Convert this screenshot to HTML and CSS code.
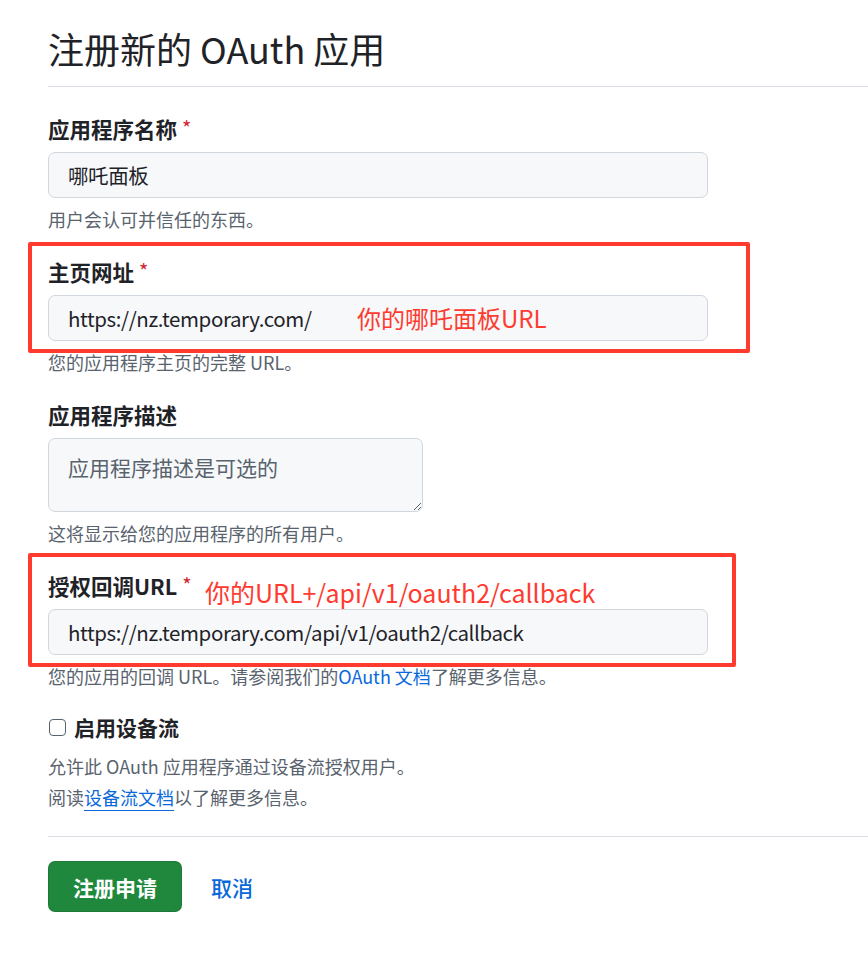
FILE: index.html
```html
<!DOCTYPE html>
<html lang="zh-CN">
<head>
  <meta charset="UTF-8" />
  <meta name="viewport" content="width=device-width, initial-scale=1.0"/>
  <title>注册新的 OAuth 应用</title>
  <link rel="stylesheet" href="styles.css">
</head>
<body>

  <div class="page">
    <h1 class="title">注册新的 OAuth 应用</h1>

    <form onsubmit="return false">
      <div class="form-group">
        <label class="label" for="appName">应用程序名称 <span class="req">*</span></label>
        <input type="text" id="appName" class="input" value="哪吒面板">
        <p class="hint">用户会认可并信任的东西。</p>
      </div>

      <div class="form-group marked">
        <div class="mark mark-home"></div>
        <label class="label" for="homeUrl">主页网址 <span class="req">*</span></label>
        <div class="input-wrap">
          <input type="text" id="homeUrl" class="input" value="https://nz.temporary.com/">
          <span class="note note-home">你的哪吒面板URL</span>
        </div>
        <p class="hint">您的应用程序主页的完整 URL。</p>
      </div>

      <div class="form-group">
        <label class="label" for="desc">应用程序描述</label>
        <textarea id="desc" class="textarea" placeholder="应用程序描述是可选的"></textarea>
        <p class="hint">这将显示给您的应用程序的所有用户。</p>
      </div>

      <div class="form-group marked">
        <div class="mark mark-callback"></div>
        <label class="label" for="callback">授权回调URL <span class="req">*</span></label>
        <span class="note note-callback">你的URL+/api/v1/oauth2/callback</span>
        <input type="text" id="callback" class="input" value="https://nz.temporary.com/api/v1/oauth2/callback">
        <p class="hint">您的应用的回调 URL。请参阅我们的<a href="#">OAuth 文档</a>了解更多信息。</p>
      </div>

      <div class="form-group device">
        <label class="check-row">
          <input type="checkbox" class="check">
          <span class="check-label">启用设备流</span>
        </label>
        <p class="desc">允许此 OAuth 应用程序通过设备流授权用户。</p>
        <p class="desc">阅读<a href="#" class="underline">设备流文档</a>以了解更多信息。</p>
      </div>

      <div class="actions">
        <button type="submit" class="btn">注册申请</button>
        <a href="#" class="cancel">取消</a>
      </div>
    </form>
  </div>

</body>
</html>
```

FILE: styles.css
```css
* { margin: 0; padding: 0; box-sizing: border-box; }
body {
  font-family: "Noto Sans CJK SC", "Noto Sans", sans-serif;
  color: #1f2328;
  background: #fff;
}
.page {
  padding-left: 48px;
}
.title {
  font-size: 36px;
  font-weight: 400;
  line-height: 48px;
  padding-top: 24px;
  padding-bottom: 14px;
  border-bottom: 1px solid #d8dee4;
}
.form-group {
  position: relative;
  margin-top: 26px;
  width: 660px;
}
.form-group:first-child { margin-top: 27px; }
.label {
  display: flex;
  align-items: center;
  gap: 5px;
  height: 28px;
  font-size: 21.5px;
  font-weight: 700;
  margin-bottom: 10px;
}
.req {
  color: #d1242f;
  font-weight: 400;
  font-size: 20px;
  line-height: 1;
}
.input {
  display: block;
  width: 660px;
  height: 46px;
  padding: 0 19px;
  font-family: inherit;
  font-size: 20.5px;
  letter-spacing: -0.4px;
  color: #1f2328;
  background: #f6f8fa;
  border: 1px solid #d0d7de;
  border-radius: 7px;
}
.input:focus, .textarea:focus { outline: none; }
.input-wrap { position: relative; }
.textarea {
  display: block;
  width: 375px;
  height: 74px;
  padding: 14px 19px;
  font-family: inherit;
  font-size: 21px;
  line-height: 28px;
  color: #1f2328;
  background: #f6f8fa;
  border: 1px solid #d0d7de;
  border-radius: 7px;
}
.textarea::placeholder { color: #59636e; }
.hint {
  font-size: 18px;
  line-height: 24px;
  color: #59636e;
  margin-top: 9px;
}
.hint a {
  color: #0969da;
  text-decoration: none;
}

/* red annotations drawn over the screenshot */
.mark {
  position: absolute;
  left: -20px;
  border: 4px solid #ff3b30;
  border-radius: 2px;
  pointer-events: none;
}
.mark-home { top: -15px; width: 722px; height: 111px; }
.mark-callback { top: -18px; width: 708px; height: 114px; }
.note {
  position: absolute;
  color: #ff3b30;
  font-size: 24px;
  line-height: 34px;
  white-space: nowrap;
}
.note-home { left: 309px; top: 6px; }
.note-callback { left: 157px; top: 4px; font-size: 25px; }

.device { margin-top: 25px; }
.check-row {
  display: flex;
  align-items: center;
  gap: 8px;
  height: 28px;
}
.check {
  appearance: none;
  width: 17px;
  height: 17px;
  margin-left: 1px;
  border: 1.5px solid #59636e;
  border-radius: 4px;
  background: #fff;
}
.check-label {
  font-size: 21px;
  font-weight: 700;
}
.desc {
  font-size: 18px;
  line-height: 31px;
  color: #59636e;
}
.device .check-row + .desc { margin-top: 10px; }
.desc a {
  color: #0969da;
  text-decoration: none;
}
.desc a.underline {
  text-decoration: underline;
  text-underline-offset: 5px;
}
.actions {
  margin-top: 23px;
  padding-top: 24px;
  border-top: 1px solid #d8dee4;
  display: flex;
  align-items: center;
  gap: 29px;
  padding-bottom: 40px;
}
.btn {
  height: 51px;
  padding: 0 24px;
  background: #1f883d;
  color: #fff;
  border: 1px solid rgba(31,35,40,0.15);
  border-radius: 7px;
  font-family: inherit;
  font-size: 21px;
  font-weight: 700;
  cursor: pointer;
}
.cancel {
  color: #0969da;
  font-size: 21px;
  font-weight: 500;
  text-decoration: none;
}
```
